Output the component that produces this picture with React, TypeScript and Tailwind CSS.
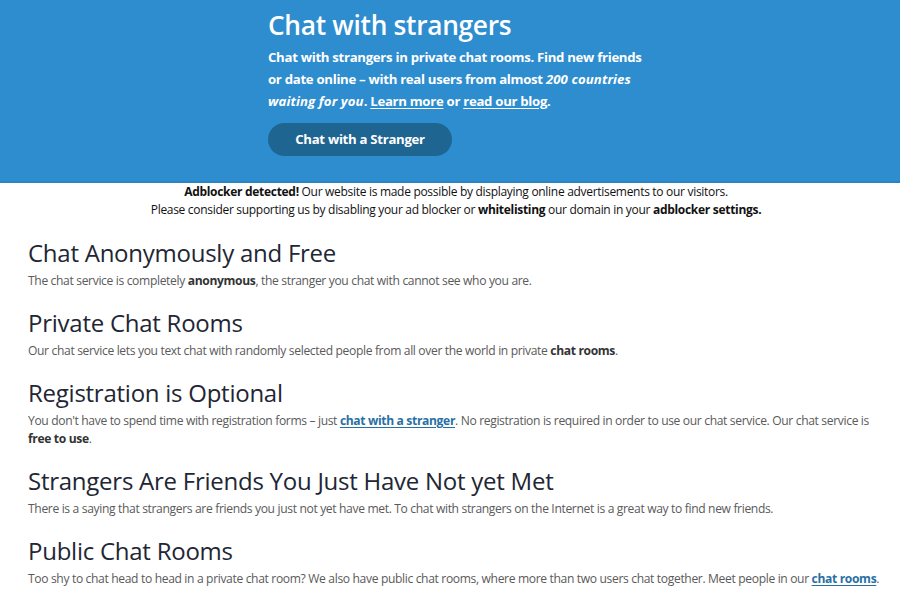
import React from "react";

const font = { fontFamily: '"Open Sans", "Noto Sans", sans-serif' };

function Section({ title, children }: { title: string; children: React.ReactNode }) {
  return (
    <section className="mb-[17px]">
      <h2 className="text-[24px] leading-[32px] text-[#222634] font-medium tracking-[-0.25px] mb-[3px]">{title}</h2>
      <p className="text-[12.1px] leading-[18px] text-[#5a5a5a] tracking-[-0.35px]">{children}</p>
    </section>
  );
}

const Link = ({ children }: { children: React.ReactNode }) => (
  <a href="#" className="font-bold text-[#2a6fa3] underline underline-offset-2">{children}</a>
);

export default function App() {
  return (
    <div className="w-[900px] h-[600px] overflow-hidden bg-white" style={font}>
      <header className="bg-[#2e8dce] border-b-2 border-[#2a84c2] h-[183px] pl-[268px] pt-[7px]">
        <h1 className="text-[26.3px] leading-[36px] text-white font-semibold tracking-[-0.3px]">Chat with strangers</h1>
        <p className="mt-[3px] text-[13.2px] leading-[22px] text-white font-bold w-[390px] tracking-[-0.3px]">
          Chat with strangers in private chat rooms. Find new friends or date online – with real users from almost{" "}
          <em className="tracking-[0.1px]">200 countries waiting for you</em>. <a href="#" className="underline underline-offset-2">Learn more</a> or{" "}
          <a href="#" className="underline underline-offset-2">read our blog</a>.
        </p>
        <button className="mt-[11px] h-[33px] w-[184px] rounded-full bg-[#1f6592] text-white text-[13.2px] font-bold tracking-[-0.3px]">
          Chat with a Stranger
        </button>
      </header>
      <div className="pl-[12px] text-center text-[12px] leading-[18px] text-[#111] tracking-[-0.3px]">
        <p><b>Adblocker detected!</b> Our website is made possible by displaying online advertisements to our visitors.</p>
        <p>Please consider supporting us by disabling your ad blocker or <b>whitelisting</b> our domain in your <b>adblocker settings.</b></p>
      </div>
      <main className="pl-[28px] pr-[20px] pt-[18px]">
        <Section title="Chat Anonymously and Free">
          The chat service is completely <b className="text-[#333]">anonymous</b>, the stranger you chat with cannot see who you are.
        </Section>
        <Section title="Private Chat Rooms">
          Our chat service lets you text chat with randomly selected people from all over the world in private <b className="text-[#333]">chat rooms</b>.
        </Section>
        <Section title="Registration is Optional">
          You don't have to spend time with registration forms – just <Link>chat with a stranger</Link>. No registration is required in order to use our chat service. Our chat service is{" "}
          <b className="text-[#333]">free to use</b>.
        </Section>
        <Section title="Strangers Are Friends You Just Have Not yet Met">
          There is a saying that strangers are friends you just not yet have met. To chat with strangers on the Internet is a great way to find new friends.
        </Section>
        <Section title="Public Chat Rooms">
          Too shy to chat head to head in a private chat room? We also have public chat rooms, where more than two users chat together. Meet people in our <Link>chat rooms</Link>.
        </Section>
      </main>
    </div>
  );
}
